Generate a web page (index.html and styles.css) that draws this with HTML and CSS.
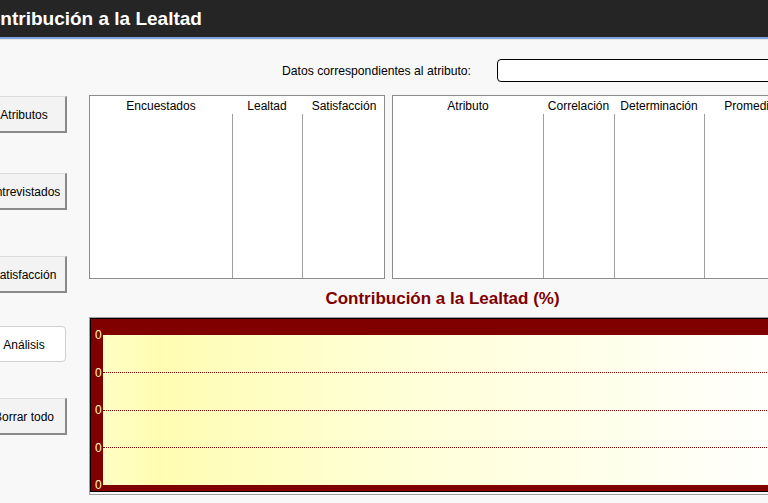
FILE: index.html
```html
<html lang="es"><head>
    <meta charset="UTF-8">
    <meta name="viewport" content="width=device-width, initial-scale=1.0">
    <title>Contribución a la Lealtad</title>
    <link rel="stylesheet" href="styles.css">
  </head>
  <body>
    <header class="titlebar">
      <h1>Contribución a la Lealtad</h1>
    </header>
    <main class="window">
      <section class="actions">
        <button class="btn first">Atributos</button>
        <button class="btn second">Entrevistados</button>
        <button class="btn third">Satisfacción</button>
        <button class="btn flat fourth">Análisis</button>
        <button class="btn fifth">Borrar todo</button>
      </section>
      <section class="content">
        <div class="attr-row">
          <label>Datos correspondientes al atributo:</label>
          <div class="attr-input"></div>
        </div>
        <div class="grids">
          <div class="grid grid-one">
            <div class="col" style="width: 142px"><div class="head">Encuestados</div><div class="body"></div></div>
            <div class="col" style="width: 70px"><div class="head">Lealtad</div><div class="body"></div></div>
            <div class="col" style="width: 84px"><div class="head">Satisfacción</div><div class="body"></div></div>
          </div>
          <div class="grid grid-two">
            <div class="col" style="width: 150px"><div class="head">Atributo</div><div class="body"></div></div>
            <div class="col" style="width: 71px"><div class="head">Correlación</div><div class="body"></div></div>
            <div class="col" style="width: 90px"><div class="head">Determinación</div><div class="body"></div></div>
            <div class="col" style="width: 92px"><div class="head">Promedio</div><div class="body"></div></div>
          </div>
        </div>
        <h2 class="chart-title">Contribución a la Lealtad (%)</h2>
        <div class="chart">
          <div class="chart-frame">
            <div class="plot">
              <div class="band"></div>
              <div class="band"></div>
              <div class="band"></div>
              <div class="band"></div>
              <span class="tick" style="top: 0%">0</span>
              <span class="tick" style="top: 25%">0</span>
              <span class="tick" style="top: 50%">0</span>
              <span class="tick" style="top: 75%">0</span>
              <span class="tick" style="top: 100%">0</span>
            </div>
          </div>
        </div>
      </section>
    </main>
  </body></html>
```

FILE: styles.css
```css
* {
    margin: 0;
    padding: 0;
    box-sizing: border-box;
}
body {
    width: 768px;
    height: 503px;
    overflow: hidden;
    background: #f8f8f8;
    font-family: 'Liberation Sans', Arial, sans-serif;
    font-size: 12px;
    color: #000;
}
.titlebar {
    height: 39px;
    background: #252525;
    border-bottom: 2px solid #7ea6dc;
    box-shadow: 0 1px 0 #e6e6e6;
    overflow: hidden;
}
.titlebar h1 {
    margin-left: -25px;
    font-size: 19px;
    font-weight: bold;
    color: #fff;
    line-height: 38px;
    white-space: nowrap;
}
.window {
    display: flex;
    gap: 22px;
}
.actions {
    display: flex;
    flex-direction: column;
    width: 85px;
    margin-left: -18px;
    flex-shrink: 0;
}
.btn {
    height: 37px;
    padding-top: 2px;
    background: #f3f3f3;
    border: 1px solid #dcdcdc;
    border-right: 2px solid #8a8a8a;
    border-bottom: 2px solid #8a8a8a;
    font-family: inherit;
    font-size: 12px;
    color: #000;
    white-space: nowrap;
}
.btn.flat {
    height: 36px;
    width: 84px;
    background: #fff;
    border: 1px solid #d0d0d0;
    border-radius: 4px;
}
.first { margin-top: 57px; }
.second { margin-top: 40px; }
.third { margin-top: 46px; }
.fourth { margin-top: 33px; }
.fifth { margin-top: 36px; }

.content {
    width: 707px;
    flex-shrink: 0;
}
.attr-row {
    display: flex;
    justify-content: flex-end;
    align-items: center;
    gap: 26px;
    margin-top: 20px;
}
.attr-row label {
    font-size: 12.2px;
}
.attr-input {
    width: 299px;
    height: 23px;
    background: #fff;
    border: 1px solid #000;
    border-radius: 4px;
}
.grids {
    display: flex;
    gap: 7px;
    margin-top: 13px;
}
.grid {
    display: flex;
    height: 184px;
    background: #fff;
    border: 1px solid #8c8c8c;
}
.grid-one { width: 296px; }
.grid-two { width: 404px; }
.col {
    display: flex;
    flex-direction: column;
    flex-shrink: 0;
}
.col + .col .body {
    border-left: 1px solid #a0a0a0;
}
.head {
    height: 18px;
    line-height: 20px;
    text-align: center;
    white-space: nowrap;
}
.body {
    flex: 1;
}
.chart-title {
    margin-top: 10px;
    height: 20px;
    line-height: 20px;
    text-align: center;
    font-size: 17px;
    font-weight: bold;
    color: #800000;
}
.chart {
    margin-top: 8px;
    border-top: 1px solid #a0a0a0;
    border-left: 1px solid #a0a0a0;
    border-bottom: 1px solid #a0a0a0;
    padding-bottom: 2px;
}
.chart-frame {
    background: #800000;
    border: 1px solid #000;
    padding: 16px 0 6px 12px;
}
.plot {
    position: relative;
    height: 150px;
    display: flex;
    flex-direction: column;
    background: linear-gradient(to right, #ffffc4 0%, #fffcb2 8%, #ffffd4 40%, #fffff0 78%, #ffffff 100%);
}
.band {
    flex: 1;
}
.band + .band {
    border-top: 1px dotted #800000;
}
.tick {
    position: absolute;
    left: -8px;
    transform: translateY(-50%);
    font-size: 12px;
    line-height: 12px;
    color: #ffffc0;
}
```
